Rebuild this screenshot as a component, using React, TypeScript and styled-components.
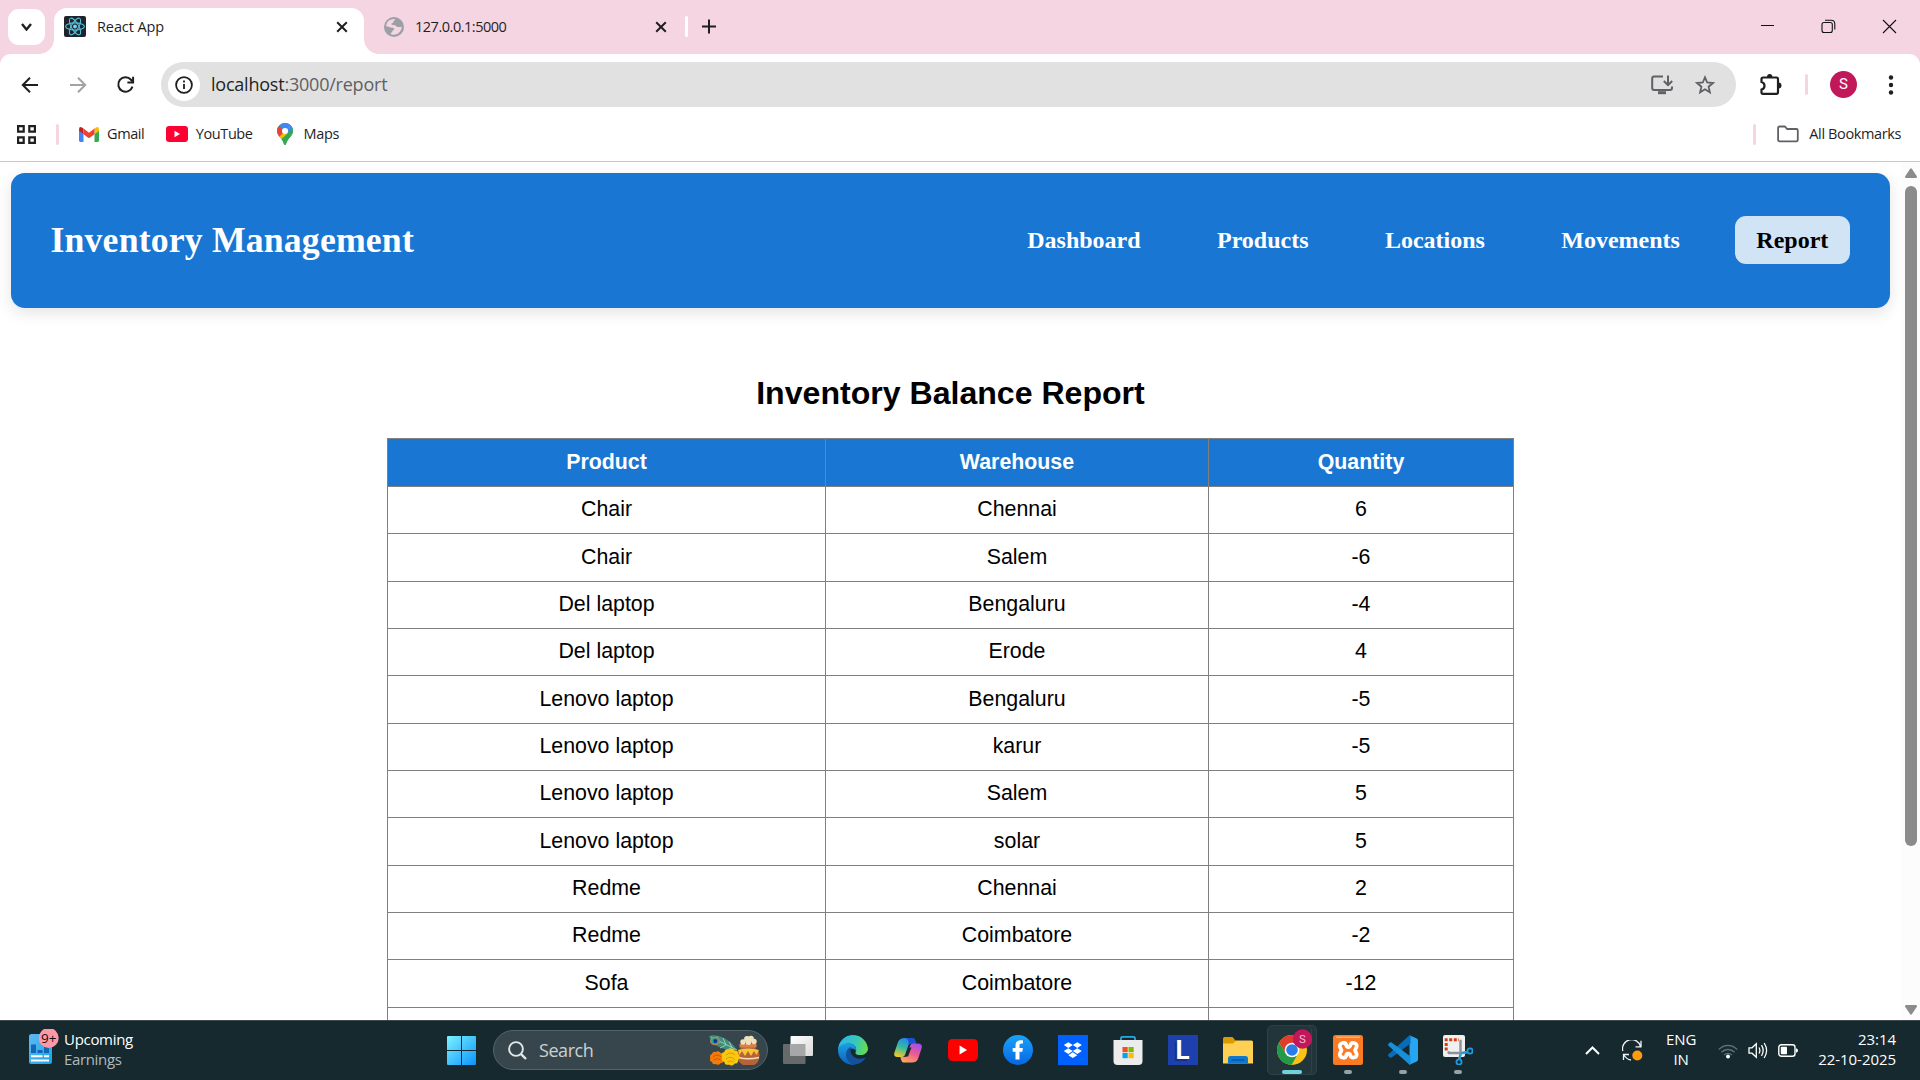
import React from "react";
import styled, { createGlobalStyle } from "styled-components";

const UI = `"Open Sans", "Noto Sans", sans-serif`;

const Global = createGlobalStyle`
  html, body { margin: 0; padding: 0; overflow: hidden; background: #fff; }
  * { box-sizing: border-box; }
  svg { display: block; flex: none; }
`;

const Screen = styled.div`
  width: 1920px;
  height: 1080px;
  display: flex;
  flex-direction: column;
  background: #fff;
  font-family: ${UI};
  color: #1f1f1f;
  overflow: hidden;
`;

/* ---------- tab strip ---------- */

const TabStrip = styled.div`
  height: 54px;
  flex: none;
  display: flex;
  background: #f6d5e3;
`;

const TabSearch = styled.div`
  width: 37px;
  height: 36px;
  margin: 9px 9px 0 8px;
  border-radius: 11px;
  background: #fff;
  display: flex;
  align-items: center;
  justify-content: center;
`;

const Flare = styled.div<{ $side: "left" | "right" }>`
  width: 15px;
  height: 15px;
  align-self: flex-end;
  margin-${(p) => p.$side}: ${(p) => (p.$side === "left" ? "-15px" : "0")};
  background: radial-gradient(
    circle at ${(p) => (p.$side === "left" ? "0 0" : "100% 0")},
    transparent 14.5px,
    #fff 15.3px
  );
`;

const ActiveTab = styled.div`
  width: 310px;
  height: 46px;
  margin-top: 8px;
  padding: 0 16px 9px 10px;
  border-radius: 13px 13px 0 0;
  background: #fff;
  display: flex;
  align-items: center;
`;

const IdleTab = styled.div`
  width: 306px;
  height: 38px;
  margin-top: 8px;
  padding: 0 18px 1px 5px;
  display: flex;
  align-items: center;
`;

const TabTitle = styled.span<{ $ls?: number }>`
  flex: 1;
  margin-left: 11px;
  font-size: 14.5px;
  line-height: 20px;
  letter-spacing: ${(p) => p.$ls ?? 0}px;
  white-space: nowrap;
`;

const Divider = styled.div<{ $color: string; $m: string }>`
  width: 3px;
  height: 21px;
  flex: none;
  margin: ${(p) => p.$m};
  border-radius: 2px;
  background: ${(p) => p.$color};
`;

const NewTab = styled.div`
  padding: 19px 0 0 14px;
`;

const WindowControls = styled.div`
  margin-left: auto;
  padding: 19px 23px 0 0;
  display: flex;
  gap: 46px;
`;

/* ---------- toolbar ---------- */

const ToolbarBack = styled.div`
  height: 61px;
  flex: none;
  background: linear-gradient(#f6d5e3 20px, #fff 20px);
`;

const Toolbar = styled.div`
  height: 61px;
  padding: 8px 0 8px 21px;
  border-radius: 11px 11px 0 0;
  background: #fff;
  display: flex;
  align-items: center;
`;

const NavButtons = styled.div`
  width: 140px;
  flex: none;
  display: flex;
  gap: 29.5px;
  align-items: center;
`;

const AddressBar = styled.div`
  width: 1575px;
  height: 45px;
  flex: none;
  padding: 0 21px 0 7px;
  border-radius: 23px;
  background: #e1e1e1;
  display: flex;
  align-items: center;
`;

const SiteInfo = styled.div`
  width: 32px;
  height: 32px;
  border-radius: 50%;
  background: #fff;
  display: flex;
  align-items: center;
  justify-content: center;
`;

const Url = styled.span`
  flex: 1;
  margin: 0 0 2px 11px;
  font-size: 18px;
  line-height: 26px;
  letter-spacing: -0.22px;
  color: #5f6063;
  b { font-weight: 400; color: #1f1f1f; }
`;

const Star = styled.div`
  margin-left: 22px;
`;

const ToolbarEnd = styled.div`
  flex: 1;
  padding: 0 0 0 24px;
  display: flex;
  align-items: center;
`;

const Avatar = styled.div`
  width: 27px;
  height: 27px;
  margin: 0 31px 0 22px;
  border-radius: 50%;
  background: #c2185b;
  color: #fff;
  font: 15px/27px Roboto, sans-serif;
  text-align: center;
`;

/* ---------- bookmarks ---------- */

const Bookmarks = styled.div`
  height: 47px;
  flex: none;
  padding: 0 19px 8px 17px;
  border-bottom: 1px solid #c9c9c9;
  display: flex;
  align-items: center;
`;

const Bookmark = styled.div<{ $gap: number; $right: number; $ls: number }>`
  display: flex;
  align-items: center;
  gap: ${(p) => p.$gap}px;
  margin-right: ${(p) => p.$right}px;
  font-size: 14.5px;
  line-height: 20px;
  letter-spacing: ${(p) => p.$ls}px;
  white-space: nowrap;
`;

const AllBookmarks = styled.div`
  margin-left: auto;
  display: flex;
  align-items: center;
`;

/* ---------- page ---------- */

const Viewport = styled.div`
  height: 858px;
  flex: none;
  display: flex;
  overflow: hidden;
`;

const Page = styled.div`
  width: 1901px;
  padding: 11px;
  color: #000;
`;

const Header = styled.header`
  height: 135px;
  padding: 0 40px;
  border-radius: 14px;
  background: #1976d2;
  box-shadow: 0 5px 16px rgba(0, 0, 0, 0.11);
  display: flex;
  align-items: center;
  justify-content: space-between;
`;

const Brand = styled.h1`
  margin: 0 0 1px -0.5px;
  font: bold 35.75px/41px "Liberation Serif", serif;
  letter-spacing: 0.15px;
  color: #fff;
`;

const Nav = styled.nav`
  display: flex;
  gap: 33px;
  margin-bottom: 2px;
`;

const NavLink = styled.a<{ $active?: boolean }>`
  padding: 11px 21.7px;
  border-radius: 11px;
  font: bold 24px/26px "Liberation Serif", serif;
  color: ${(p) => (p.$active ? "#000" : "#fff")};
  background: ${(p) => (p.$active ? "#d1e4f6" : "transparent")};
`;

const Content = styled.main`
  padding-top: 66px;
  font-family: "Liberation Sans", Arial, sans-serif;
`;

const Title = styled.h2`
  margin: 0 0 26px;
  font-size: 32.1px;
  line-height: 38px;
  text-align: center;
`;

const Table = styled.table`
  width: 1126px;
  margin: 0 auto;
  table-layout: fixed;
  border-collapse: collapse;
  font-size: 21.35px;
  line-height: 24px;
  text-align: center;
`;

const Cell = styled.td`
  height: 47.33px;
  padding: 0 0 1.5px;
  border: 1px solid #808080;
`;

const HeadCell = styled.th<{ $w: number }>`
  width: ${(p) => p.$w}px;
  height: 48px;
  padding: 0 0 2px;
  border: 1px solid #808080;
  background: #1976d2;
  color: #fff;
`;

const Scrollbar = styled.div`
  width: 19px;
  background: #fcfcfc;
  display: flex;
  flex-direction: column;
  align-items: center;
  padding: 6px 0 5px 0;
`;

const Thumb = styled.div`
  width: 12px;
  height: 660px;
  margin: 8px 0 auto;
  border-radius: 6px;
  background: #8b8b8b;
`;

/* ---------- taskbar ---------- */

const Taskbar = styled.footer`
  height: 60px;
  flex: none;
  border-top: 1px solid #3b494f;
  background: #15292f;
  display: flex;
  color: #fff;
`;

const Widgets = styled.div`
  width: 447px;
  padding: 8px 0 0 28px;
  display: flex;
  gap: 4px;
`;

const WidgetText = styled.div`
  display: flex;
  flex-direction: column;
  font-size: 15px;
  line-height: 20px;
  color: #fff;
  span:last-child { color: #b2babc; letter-spacing: -0.35px; }
  span:first-child { letter-spacing: -0.3px; }
`;

const Start = styled.div`
  width: 46px;
  padding-top: 15px;
`;

const SearchBox = styled.div`
  width: 275px;
  height: 40px;
  margin: 9px 2px 0 0;
  padding: 0 6px 0 14px;
  border: 1px solid #55636a;
  border-radius: 20px;
  background: #37464c;
  display: flex;
  align-items: center;
  font-size: 18px;
  color: #ccd1d3;
  span { flex: 1; margin-left: 12px; letter-spacing: -0.45px; }
`;

const AppButton = styled.div`
  width: 55px;
  height: 50px;
  margin-top: 4px;
  padding-top: 10px;
  display: flex;
  flex-direction: column;
  align-items: center;
  gap: 5px;
`;

const FocusPlate = styled.div`
  width: 45px;
  height: 50px;
  margin: 4px 8px 0 2px;
  padding-left: 5px;
  border: 1px solid #2f4147;
  border-radius: 5px;
  background: #22353b;
  box-shadow: 5px 0 0 -1px #22353b, 5px 0 0 0 #2f4147;
  display: flex;
  flex-direction: column;
  align-items: center;
  gap: 4px;
`;

const Indicator = styled.i<{ $on?: boolean }>`
  width: ${(p) => (p.$on ? 20 : 8)}px;
  height: 4px;
  border-radius: 2px;
  background: ${(p) => (p.$on ? "#6fd3da" : "#98a1a5")};
`;

const LetterTile = styled.div`
  width: 30px;
  height: 30px;
  background: #1e40af;
  font: bold 26px/30px Roboto, sans-serif;
  text-align: center;
  text-shadow: -2px 2px 0 #173080;
`;

const IconSlot = styled.div`
  height: 30px;
  display: flex;
  align-items: center;
`;

const Tray = styled.div`
  margin-left: auto;
  padding-right: 24px;
  display: flex;
  align-items: center;
`;

const Stack = styled.div<{ $align: string; $m: string; $ls: number }>`
  margin: ${(p) => p.$m};
  padding-bottom: 3px;
  display: flex;
  flex-direction: column;
  align-items: ${(p) => p.$align};
  font-size: 15px;
  line-height: 20px;
  letter-spacing: ${(p) => p.$ls}px;
  white-space: nowrap;
`;

const TrayIcon = styled.div<{ $m: string }>`
  margin: ${(p) => p.$m};
`;

/* ---------- icons ---------- */

const ReactLogo = () => (
  <svg width="22" height="21" viewBox="0 0 22 21">
    <rect width="22" height="21" rx="2" fill="#20232a" />
    <g fill="none" stroke="#53c1de" strokeWidth="1.1">
      <ellipse cx="11" cy="10.5" rx="9.4" ry="3.6" />
      <ellipse cx="11" cy="10.5" rx="9.4" ry="3.6" transform="rotate(60 11 10.5)" />
      <ellipse cx="11" cy="10.5" rx="9.4" ry="3.6" transform="rotate(120 11 10.5)" />
    </g>
    <circle cx="11" cy="10.5" r="1.9" fill="#61dafb" />
  </svg>
);

const CloseX = () => (
  <svg width="12" height="12" viewBox="0 0 12 12" stroke="#1f1f1f" strokeWidth="2">
    <path d="M1.2 1.2l9.6 9.6M10.8 1.2l-9.6 9.6" />
  </svg>
);

const Globe = () => (
  <svg width="20" height="20" viewBox="0 0 20 20">
    <circle cx="10" cy="10" r="10" fill="#9aa0a6" />
    <path d="M2.2 9.6C2 6.600 3.600 3.800 6.500 2.700c1.300-.5 3.200-.9 4.700-.6-.2 1.300-1.600 1.300-1.700 2.600 0 1.100-1 1.400-1.900 1.500-.4 1-.1 1.600 1 1.700 1.400.1 2.800-.1 3.500 1.200.4.900 1.200.9 2.200.9 1.200 0 2.300.1 3.500-.3-.2 3.900-3.500 7.900-7.800 8-1.500.1-2.700-.3-3.500-.9.300-1.300 1.700-1.200 1.900-2.500.3-1.500 1.700-1 1.900-2.300-.6-1.600-2-1.200-3.300-1.500-1.800-.3-3-.9-4.800-.9z" fill="#f6d5e3" />
  </svg>
);

const Chevron = ({ w, h, sw, color, up }: { w: number; h: number; sw: number; color: string; up?: boolean }) => (
  <svg width={w} height={h} viewBox={`0 0 ${w} ${h}`} fill="none" stroke={color} strokeWidth={sw}>
    <path d={up ? `M1 ${h - 1}L${w / 2} 1.500L${w - 1} ${h - 1}` : `M1 1L${w / 2} ${h - 1.5}L${w - 1} 1`} />
  </svg>
);

const Arrow = ({ color, flip }: { color: string; flip?: boolean }) => (
  <svg width="18" height="18" viewBox="0 0 18 18" fill="none" stroke={color} strokeWidth="2">
    <g transform={flip ? "matrix(-1 0 0 1 18 0)" : undefined}>
      <path d="M17 9H2.500M9 1.800L1.800 9L9 16.200" />
    </g>
  </svg>
);

const Reload = () => (
  <svg width="19" height="19" viewBox="0 0 20 20" fill="none" stroke="#1f1f1f" strokeWidth="2.1">
    <path d="M17.300 12.200A7.600 7.600 0 1 1 15.800 5L17.500 7" />
    <path d="M18 1.800V7.800H12" />
  </svg>
);

const Info = () => (
  <svg width="18" height="18" viewBox="0 0 18 18" fill="none" stroke="#1f1f1f" strokeWidth="1.800">
    <circle cx="9" cy="9" r="7.900" />
    <path d="M9 8v5M9 4.600v1.800" />
  </svg>
);

const Install = () => (
  <svg width="22" height="20" viewBox="0 0 22 20" fill="none" stroke="#606164" strokeWidth="2">
    <path d="M12 1.500H3.200Q1.200 1.500 1.200 3.500V13Q1.200 15 3.200 15H19Q21 15 21 13V11.500" />
    <path d="M17 .5V10M12.800 6L17 10.200L21.200 6" />
    <path d="M7 17.700H15" strokeWidth="3" />
  </svg>
);

const StarIcon = () => (
  <svg width="20" height="20" viewBox="0 0 20 20" fill="none" stroke="#606164" strokeWidth="1.800">
    <path d="M10 2.300L12.200 7.500L17.900 8L13.600 11.700L14.900 17.300L10 14.300L5.100 17.300L6.400 11.700L2.100 8L7.800 7.500Z" />
  </svg>
);

const Puzzle = () => (
  <svg width="22" height="22" viewBox="0 0 22 22">
    <path d="M3 3.500H16.500Q18 3.500 18 5V18Q18 19.800 16.500 19.800H3Q1.500 19.800 1.500 18.500V15.500C5.500 14.500 5.500 9 1.500 8V5Q1.500 3.500 3 3.500Z" fill="none" stroke="#1f1f1f" strokeWidth="2.200" />
    <path d="M7 3a2.700 3 0 0 1 5.400 0zM18.500 8.500a3 2.900 0 0 1 0 5.800z" fill="#1f1f1f" />
  </svg>
);

const AppsGrid = () => (
  <svg width="19" height="19" viewBox="0 0 19 19" fill="none" stroke="#1f1f1f" strokeWidth="2.200">
    <path d="M1.100 1.100h5.600v5.600H1.100zM12.300 1.100h5.600v5.600h-5.600zM1.100 12.300h5.600v5.600H1.100zM12.300 12.300h5.600v5.600h-5.600z" />
  </svg>
);

const GmailLogo = () => (
  <svg width="20" height="15" viewBox="0 0 20 15">
    <path d="M0 3.500L4.500 6.800V15H1.400Q0 15 0 13.600z" fill="#4285f4" />
    <path d="M20 3.500L15.500 6.800V15H18.600Q20 15 20 13.600z" fill="#34a853" />
    <path d="M15.500 1.500L17 .4Q20-.8 20 2.500V3.800L15.500 7.200z" fill="#fbbc04" />
    <path d="M4.500 1.500L3 .4Q0-.8 0 2.500V3.800L4.500 7.200z" fill="#c5221f" />
    <path d="M4.500 1.500L10 5.700L15.500 1.500V7.200L10 11.300L4.500 7.200z" fill="#ea4335" />
  </svg>
);

const YouTubeLogo = ({ w, h, color }: { w: number; h: number; color: string }) => (
  <svg width={w} height={h} viewBox="0 0 22 15.500" preserveAspectRatio="none">
    <rect width="22" height="15.500" rx="3.200" fill={color} />
    <path d="M8.500 4.600V10.900L14 7.750z" fill="#fff" />
  </svg>
);

const MapsLogo = () => (
  <svg width="16" height="22" viewBox="0 0 16 22">
    <clipPath id="pin">
      <path d="M8 0a8 8 0 0 1 8 8c0 5-5.500 7-7 13.200q-.2.800-1 .8t-1-.8C5.500 15 0 13 0 8a8 8 0 0 1 8-8z" />
    </clipPath>
    <g clipPath="url(#pin)">
      <rect width="16" height="22" fill="#34a853" />
      <path d="M0 2L8 8L2.500 14L-1 12z" fill="#ea4335" />
      <path d="M8 8L1.500 14.500L5 18L15 4L12 3z" fill="#fbbc04" />
      <path d="M10 11L16 4V14L8 22H4L3 17.500z" fill="#34a853" />
      <path d="M2 2.500L8 8L15 1L8-2z" fill="#4285f4" />
      <path d="M10 6L14.500 1.500L16 5L11.500 9.500z" fill="#4285f4" />
    </g>
    <circle cx="8" cy="8" r="3" fill="#fff" />
  </svg>
);

const FolderOutline = () => (
  <svg width="22" height="18" viewBox="0 0 22 18" fill="none" stroke="#606164" strokeWidth="1.800">
    <path d="M1.100 14.800V3Q1.100 1.500 2.600 1.500H7.800L10.200 4H19.300Q20.800 4 20.800 5.500V14.800Q20.800 16.400 19.300 16.400H2.600Q1.100 16.400 1.100 14.800z" />
  </svg>
);

const WidgetIcon = () => (
  <svg width="32" height="36" viewBox="0 0 32 36">
    <defs>
      <linearGradient id="wg" x1="0" y1="0" x2="1" y2="1">
        <stop offset="0" stopColor="#62b8f2" />
        <stop offset="1" stopColor="#19a5ea" />
      </linearGradient>
    </defs>
    <rect x="1" y="5" width="23" height="30" rx="2.500" fill="url(#wg)" />
    <path d="M3 15.500h5v8.500H3zM9.500 21h5v3h-5zM16 18h5v6h-5z" fill="#1267b4" />
    <path d="M3 27.300h11.500M16 27.300h5M3 31.500h18" stroke="#fff" strokeWidth="2" />
    <circle cx="20.700" cy="9" r="10" fill="#ff98a5" />
    <text x="20.700" y="13.800" fontSize="13.500" textAnchor="middle" fill="#111" fontFamily="Open Sans, sans-serif">9+</text>
  </svg>
);

const WindowsLogo = () => (
  <svg width="29" height="29" viewBox="0 0 29 29">
    <defs>
      <linearGradient id="win" x1="0" y1="0" x2="1" y2="1">
        <stop offset="0" stopColor="#7df2ff" />
        <stop offset="1" stopColor="#0a93fb" />
      </linearGradient>
    </defs>
    <path d="M1 0H14V14H0V1Q0 0 1 0zM15 0H28Q29 0 29 1V14H15zM0 15H14V29H1Q0 29 0 28zM15 15H29V28Q29 29 28 29H15z" fill="url(#win)" />
  </svg>
);

const Magnifier = () => (
  <svg width="19" height="19" viewBox="0 0 19 19" fill="none" stroke="#e3e6e7" strokeWidth="1.900">
    <circle cx="8" cy="8" r="6.900" />
    <path d="M12.800 12.800L18 18" strokeWidth="2.400" />
  </svg>
);

const marigold = (cx: number, cy: number, r: number) =>
  Array.from({ length: 9 }, (_, i) => {
    const a = (i * Math.PI * 2) / 9;
    return <circle key={i} cx={cx + Math.cos(a) * r * 0.68} cy={cy + Math.sin(a) * r * 0.62} r={r * 0.36} />;
  });

const FestivalArt = () => (
  <svg width="53" height="31" viewBox="0 0 53 31">
    <path d="M1 1Q8-1 16 3Q24 7 29 15Q20 16 12 12.500Q3 9 1 1z" fill="#3f8c7c" />
    <path d="M3 2L29 15M9 1.500l3 6-7 1M15 3l3 7-6 3M21 6.500l3 6-5 2.500" stroke="#9cc9ad" strokeWidth="1" fill="none" />
    <ellipse cx="7" cy="6" rx="5" ry="4.300" fill="#a18a4e" />
    <ellipse cx="7" cy="6" rx="3.500" ry="3.100" fill="#2aa3a5" />
    <circle cx="7.300" cy="6" r="2" fill="#142f96" />
    <g fill="#f47b0a">{marigold(9, 23, 7)}<circle cx="9" cy="23" r="4.500" /></g>
    <path d="M5 22q4-4 8 0M5.500 25q4-3 7 0" stroke="#cf5600" fill="none" />
    <path d="M31.500 10H48.500L47 13Q52 16 51.500 21Q51 28 46 30H35Q29.500 27 29.500 21Q29.500 16 33 13z" fill="#b8623a" />
    <path d="M31.500 9H48.500V12.500H31.500z" fill="#d9814c" />
    <path d="M30 15Q40 12 51 15L48.500 20L46 16L43 21L40 16L37 21L34 16L31.500 20z" fill="#f7c733" />
    <path d="M30.500 22.500Q40 25 51 22.500" stroke="#f6dfb7" strokeWidth="1.400" fill="none" />
    <g fill="#f0e1bd">
      <circle cx="35" cy="7" r="2.700" /><circle cx="39" cy="4" r="2.900" /><circle cx="43" cy="3.500" r="2.800" />
      <circle cx="46" cy="6.500" r="2.700" /><circle cx="40.500" cy="7" r="3" />
    </g>
    <g fill="#fbc70f">{marigold(22.5, 22, 8.7)}<circle cx="22.500" cy="22" r="6" /></g>
    <path d="M18 20q5-4 9 0M18 24q5-4 9 1M19.500 27q3-2 6 0" stroke="#dd9a00" fill="none" />
  </svg>
);

const TaskView = () => (
  <svg width="30" height="30" viewBox="0 0 30 30">
    <defs>
      <linearGradient id="tv" x1="0" y1="0" x2="1" y2="1">
        <stop offset="0" stopColor="#fff" />
        <stop offset="1" stopColor="#d9d9d9" />
      </linearGradient>
    </defs>
    <rect x="0" y="9" width="22.500" height="20" rx="1" fill="#666a6b" />
    <rect x="7.500" y="1" width="22.500" height="20" rx="1" fill="url(#tv)" />
    <rect x="7.500" y="9" width="15" height="12" fill="#a6a7a8" />
  </svg>
);

const EdgeLogo = () => (
  <svg width="30" height="30" viewBox="0 0 30 30">
    <defs>
      <linearGradient id="eg1" x1="0" y1=".3" x2="1" y2=".5">
        <stop offset="0" stopColor="#2fb4ea" />
        <stop offset=".55" stopColor="#35c6c0" />
        <stop offset="1" stopColor="#66dd4e" />
      </linearGradient>
      <linearGradient id="eg2" x1="0" y1="0" x2="0" y2="1">
        <stop offset="0" stopColor="#1ba0e3" />
        <stop offset="1" stopColor="#0c5fbd" />
      </linearGradient>
      <clipPath id="edgeClip"><circle cx="15" cy="15" r="15" /></clipPath>
    </defs>
    <g clipPath="url(#edgeClip)">
      <path d="M0 14C0 5 7-.2 15-.2C24-.2 30.200 6 30.200 12.500C30.200 17 27 20 22.500 20C18.500 20 17 18.500 17.600 17C19 14.500 18 9.500 12 8.500C6 8 1 11 0 16z" fill="url(#eg1)" />
      <path d="M0 14.500C2 9.500 7 8 11 8.300C16 8.800 19 12.500 17.600 16C16.500 12.500 11 12.500 9 17C7 23 12 29 18 30H10L0 25z" fill="url(#eg2)" />
      <path d="M13 11.500C9 13.500 7 18 8.500 22.500C10 27 14 30.500 19 29.500C23 28.500 26.500 25.500 28 23C27.500 22 25 24 21.500 23.700C15 23.500 11 18 13 11.500z" fill="#13529b" />
    </g>
  </svg>
);

const CopilotLogo = () => (
  <svg width="30" height="30" viewBox="0 0 30 30">
    <defs>
      <linearGradient id="cp1" x1=".6" y1="0" x2=".2" y2="1">
        <stop offset="0" stopColor="#2086f0" />
        <stop offset=".5" stopColor="#35b9a5" />
        <stop offset="1" stopColor="#f6cc22" />
      </linearGradient>
      <linearGradient id="cp2" x1=".8" y1="0" x2=".3" y2="1">
        <stop offset="0" stopColor="#a04df0" />
        <stop offset=".5" stopColor="#ee5a90" />
        <stop offset="1" stopColor="#ffa45c" />
      </linearGradient>
    </defs>
    <path d="M12 3H19.500Q21.500 3 22.200 5.500L23 8.500H18Q16 8.500 15.300 10.500L12 20Q11 22 9 22H4.500Q.5 22 1.300 18L5 7Q6.500 3 12 3z" fill="url(#cp1)" />
    <path d="M12 3H19.500Q21.500 3 22.200 5.500L23 8.500H18L15.500 10Q16.500 4 12 3z" fill="#1a52d3" />
    <path d="M19.500 8.500H25.500Q29.800 9 28.700 13L25 24Q23.500 27.500 19 27.500H10.500Q8.500 27 8 24.500L7.300 22H11Q13.500 22 14.300 19.500L17 11Q17.800 8.500 19.500 8.500z" fill="url(#cp2)" />
    <path d="M16.500 12.500H18.500L15 21.500H12z" fill="#15292f" />
  </svg>
);

const FacebookLogo = () => (
  <svg width="30" height="30" viewBox="0 0 30 30">
    <defs>
      <linearGradient id="fb" x1="0" y1="0" x2="0" y2="1">
        <stop offset="0" stopColor="#19a3fa" />
        <stop offset="1" stopColor="#0866e4" />
      </linearGradient>
    </defs>
    <circle cx="15" cy="15" r="15" fill="url(#fb)" />
    <path d="M12.500 24.500V16.700H9.700V12.900H12.500V10.500C12.500 7 14.500 5.200 17.500 5.200C18.800 5.200 20 5.400 20 5.400V8.600H18.500C17 8.600 16.500 9.500 16.500 10.500V12.900H19.900L19.300 16.700H16.500V24.500z" fill="#fff" />
  </svg>
);

const DropboxLogo = () => (
  <svg width="30" height="30" viewBox="0 0 30 30">
    <rect width="30" height="30" fill="#0061fe" />
    <path d="M10.300 7.200l4.500 2.900-4.500 2.900-4.500-2.900zM19.300 7.200l4.500 2.900-4.500 2.900-4.500-2.900zM10.300 13.200l4.500 2.900-4.500 2.900-4.500-2.900zM19.300 13.200l4.500 2.900-4.500 2.900-4.500-2.900zM14.800 17.300l4.500 2.900-4.500 2.900-4.500-2.900z" fill="#fff" />
  </svg>
);

const StoreLogo = () => (
  <svg width="30" height="30" viewBox="0 0 30 30">
    <path d="M8 6V3.300Q8 1.800 9.500 1.800H20.500Q22 1.800 22 3.300V6" fill="none" stroke="#2ba8dc" strokeWidth="1.800" />
    <path d="M.5 5H29.500V26Q29.500 30 25.500 30H4.500Q.5 30 .5 26z" fill="#ececec" />
    <path d="M9.500 12h5.200v5.200H9.500z" fill="#f25022" />
    <path d="M15.500 12h5.200v5.200h-5.200z" fill="#7fba00" />
    <path d="M9.500 18h5.200v5.200H9.500z" fill="#00a4ef" />
    <path d="M15.500 18h5.200v5.200h-5.200z" fill="#ffb900" />
  </svg>
);

const ExplorerLogo = () => (
  <svg width="30" height="30" viewBox="0 0 30 30">
    <path d="M0 3.500Q0 2 1.500 2H9.500L12.500 5.500V9H0z" fill="#dd9a00" />
    <path d="M0 8.500H10L13 5.500H28.500Q30 5.500 30 7V28.500H0z" fill="#ffd053" />
    <path d="M5 28.500V23.500Q5 21 7.500 21H22.500Q25 21 25 23.500V28.500z" fill="#0f78cf" />
    <path d="M8.500 25H21.500" stroke="#0a4f91" strokeWidth="1.200" />
  </svg>
);

const ChromeLogo = () => (
  <svg width="44" height="40" viewBox="0 0 44 40">
    <clipPath id="chromeClip"><circle cx="22" cy="24" r="15" /></clipPath>
    <g clipPath="url(#chromeClip)">
      <rect x="7" y="9" width="30" height="30" fill="#fbc116" />
      <path d="M22 17H40V5H5L9 16.500L15.900 27.500L22 24z" fill="#e33b2e" />
      <path d="M9 16.500L15.900 27.500L22 31L28.100 27.500L21.300 39.500H5V16z" fill="#229a48" />
    </g>
    <circle cx="22" cy="24" r="7.300" fill="#fff" />
    <circle cx="22" cy="24" r="5.800" fill="#2a7de9" />
    <circle cx="32.500" cy="13" r="9.700" fill="#c2185b" />
    <text x="32.500" y="17" fontSize="11.500" textAnchor="middle" fill="#f0bfd3" fontFamily="Roboto, sans-serif">S</text>
  </svg>
);

const XamppLogo = () => (
  <svg width="30" height="30" viewBox="0 0 30 30">
    <rect width="30" height="30" rx="2.500" fill="#fb7a24" />
    <rect x="3" y="1.500" width="24" height="1.500" rx=".7" fill="#ffb27a" />
    <path d="M9.500 8Q12.500 7 13.200 10Q13.700 12 15.300 12Q16.900 12 17.400 10Q18.200 7.500 21 8Q24.500 9 23.500 12Q22.500 14 22 15.300Q22.500 16.500 23.500 18.500Q24.500 21.500 21 22.500Q18.200 23 17.400 20.500Q16.900 18.600 15.300 18.600Q13.700 18.600 13.200 20.500Q12.500 23.500 9.500 22.500Q6 21.500 7 18.500Q8 16.500 8.500 15.300Q8 14 7 12Q6 9 9.500 8z" fill="none" stroke="#fff" strokeWidth="3.800" strokeLinejoin="round" />
  </svg>
);

const VSCodeLogo = () => (
  <svg width="30" height="30" viewBox="0 0 30 30">
    <path d="M21.500.3L28.800 3.500Q30 4.200 30 5.500V24.500Q30 25.800 28.800 26.500L21.500 29.700z" fill="#25a5f2" />
    <path d="M21.500.3Q22.300 0 22.500 1V8.500L3.700 22.600Q2.800 23 2 22.500L.5 21.200Q-.4 20.200.5 19.200z" fill="#0a6bb8" />
    <path d="M21.500 29.700Q22.300 30 22.500 29V21.500L3.700 7.400Q2.800 7 2 7.500L.5 8.800Q-.4 9.800.5 10.800z" fill="#178fd9" />
  </svg>
);

const SnipLogo = () => (
  <svg width="30" height="30" viewBox="0 0 30 30">
    <rect width="22" height="22" rx="2" fill="#f0f0f0" />
    <path d="M3.200 15.500V4.700H16" fill="none" stroke="#d63b0c" strokeWidth="3" strokeDasharray="3 1.600" />
    <path d="M16.500 6L17.500 6V20L16 24M5 16.500L6 18H20L24 17" stroke="#8d9296" strokeWidth="2.400" fill="none" />
    <circle cx="27" cy="16" r="2.600" fill="none" stroke="#1d9be0" strokeWidth="1.800" />
    <circle cx="16" cy="27" r="2.600" fill="none" stroke="#1d9be0" strokeWidth="1.800" />
    <path d="M18 18L24.500 17M17.500 19L16.500 24.500" stroke="#1d9be0" strokeWidth="1.800" />
  </svg>
);

const Sync = () => (
  <svg width="21" height="21" viewBox="0 0 21 21" fill="none" stroke="#f2f4f4" strokeWidth="1.300">
    <path d="M.8 11A9 9 0 0 1 18.500 6.500M19 .8V6.800H13.500" />
    <path d="M1.500 20V14.500H7M1.800 15Q4.500 19.300 9 20" />
    <circle cx="15.300" cy="15.500" r="5" fill="#ff9c0d" stroke="none" />
  </svg>
);

const Wifi = () => (
  <svg width="20" height="16" viewBox="0 0 20 16" fill="none" stroke="#5e6c71" strokeWidth="1.400">
    <path d="M.8 6.500A12.500 12.500 0 0 1 19.200 6.500M3.500 9.300A8.800 8.800 0 0 1 16.500 9.300M6.200 12A5.200 5.200 0 0 1 13.800 12" />
    <circle cx="10" cy="13.500" r="2" fill="#fff" stroke="none" />
  </svg>
);

const Volume = () => (
  <svg width="20" height="17" viewBox="0 0 20 17" fill="none" stroke="#fff" strokeWidth="1.300">
    <path d="M1 5.800H4L8.300 1.800V15.200L4 11.200H1z" />
    <path d="M11 5.500Q12.800 8.500 11 11.500M13.500 3.200Q16.800 8.500 13.500 13.800M16.200 1Q21 8.500 16.200 16" />
  </svg>
);

const Battery = () => (
  <svg width="20" height="13" viewBox="0 0 20 13">
    <rect x=".8" y=".8" width="16.200" height="11.400" rx="2.500" fill="none" stroke="#fff" strokeWidth="1.400" />
    <rect x="2.800" y="2.800" width="6.200" height="7.400" rx=".8" fill="#fff" />
    <path d="M18 4.200Q20 4.500 20 6.500T18 8.800z" fill="#fff" />
  </svg>
);

/* ---------- data ---------- */

const links = ["Dashboard", "Products", "Locations", "Movements", "Report"];

const rows = [
  ["Chair", "Chennai", "6"],
  ["Chair", "Salem", "-6"],
  ["Del laptop", "Bengaluru", "-4"],
  ["Del laptop", "Erode", "4"],
  ["Lenovo laptop", "Bengaluru", "-5"],
  ["Lenovo laptop", "karur", "-5"],
  ["Lenovo laptop", "Salem", "5"],
  ["Lenovo laptop", "solar", "5"],
  ["Redme", "Chennai", "2"],
  ["Redme", "Coimbatore", "-2"],
  ["Sofa", "Coimbatore", "-12"],
  ["", "", ""],
];

export default function App() {
  return (
    <Screen>
      <Global />
      <TabStrip>
        <TabSearch>
          <Chevron w={11} h={8} sw={2.4} color="#1f1f1f" />
        </TabSearch>
        <Flare $side="left" />
        <ActiveTab>
          <ReactLogo />
          <TabTitle $ls={-0.1}>React App</TabTitle>
          <CloseX />
        </ActiveTab>
        <Flare $side="right" />
        <IdleTab>
          <Globe />
          <TabTitle $ls={-0.48}>127.0.0.1:5000</TabTitle>
          <CloseX />
        </IdleTab>
        <Divider $color="#fff" $m="16px 0 0" />
        <NewTab>
          <svg width="14" height="15" viewBox="0 0 14 15" stroke="#1f1f1f" strokeWidth="2">
            <path d="M7 .5v14M0 7.500h14" />
          </svg>
        </NewTab>
        <WindowControls>
          <svg width="14" height="14" viewBox="0 0 14 14" stroke="#111" strokeWidth="1">
            <path d="M0 6.500h13" />
          </svg>
          <svg width="15" height="15" viewBox="0 0 15 15" fill="none" stroke="#111" strokeWidth="1.100">
            <rect x="1" y="3.500" width="10.300" height="10" rx="2" />
            <path d="M4 1.200H10Q13.800 1.200 13.800 5V10.500" />
          </svg>
          <svg width="15" height="15" viewBox="0 0 15 15" stroke="#111" strokeWidth="1.100">
            <path d="M1 1l13 13M14 1L1 14" />
          </svg>
        </WindowControls>
      </TabStrip>

      <ToolbarBack>
        <Toolbar>
          <NavButtons>
            <Arrow color="#1f1f1f" />
            <Arrow color="#a2a2a2" flip />
            <Reload />
          </NavButtons>
          <AddressBar>
            <SiteInfo><Info /></SiteInfo>
            <Url><b>localhost</b>:3000/report</Url>
            <Install />
            <Star><StarIcon /></Star>
          </AddressBar>
          <ToolbarEnd>
            <Puzzle />
            <Divider $color="#f6d5e3" $m="0 0 0 23px" />
            <Avatar>S</Avatar>
            <svg width="6" height="20" viewBox="0 0 6 20" fill="#1f1f1f">
              <circle cx="3" cy="2.500" r="2.200" />
              <circle cx="3" cy="10" r="2.200" />
              <circle cx="3" cy="17.500" r="2.200" />
            </svg>
          </ToolbarEnd>
        </Toolbar>
      </ToolbarBack>

      <Bookmarks>
        <AppsGrid />
        <Divider $color="#f6d5e3" $m="0 20px" />
        <Bookmark $gap={8} $right={21.5} $ls={-0.4}><GmailLogo />Gmail</Bookmark>
        <Bookmark $gap={8} $right={24.5} $ls={-0.42}><YouTubeLogo w={22} h={16} color="#ff0033" />YouTube</Bookmark>
        <Bookmark $gap={10.5} $right={0} $ls={-0.35}><MapsLogo />Maps</Bookmark>
        <AllBookmarks>
          <Divider $color="#f6d5e3" $m="0 21px 0 0" />
          <Bookmark $gap={10} $right={0} $ls={-0.38}><FolderOutline />All Bookmarks</Bookmark>
        </AllBookmarks>
      </Bookmarks>

      <Viewport>
        <Page>
          <Header>
            <Brand>Inventory Management</Brand>
            <Nav>
              {links.map((l) => (
                <NavLink key={l} $active={l === "Report"}>{l}</NavLink>
              ))}
            </Nav>
          </Header>
          <Content>
            <Title>Inventory Balance Report</Title>
            <Table>
              <thead>
                <tr>
                  <HeadCell $w={438}>Product</HeadCell>
                  <HeadCell $w={383}>Warehouse</HeadCell>
                  <HeadCell $w={305}>Quantity</HeadCell>
                </tr>
              </thead>
              <tbody>
                {rows.map((r, i) => (
                  <tr key={i}>
                    {r.map((c, j) => <Cell key={j}>{c}</Cell>)}
                  </tr>
                ))}
              </tbody>
            </Table>
          </Content>
        </Page>
        <Scrollbar>
          <svg width="12" height="10" viewBox="0 0 12 10"><path d="M5 1Q6-.5 7 1L12 8.500Q12 10 11 10H1Q0 10 0 8.500z" fill="#8b8b8b" /></svg>
          <Thumb />
          <svg width="12" height="10" viewBox="0 0 12 10"><path d="M5 9Q6 10.500 7 9L12 1.500Q12 0 11 0H1Q0 0 0 1.500z" fill="#8b8b8b" /></svg>
        </Scrollbar>
      </Viewport>

      <Taskbar>
        <Widgets>
          <WidgetIcon />
          <WidgetText><span>Upcoming</span><span>Earnings</span></WidgetText>
        </Widgets>
        <Start><WindowsLogo /></Start>
        <SearchBox>
          <Magnifier />
          <span>Search</span>
          <FestivalArt />
        </SearchBox>
        <AppButton><TaskView /></AppButton>
        <AppButton><EdgeLogo /></AppButton>
        <AppButton><CopilotLogo /></AppButton>
        <AppButton><IconSlot><YouTubeLogo w={30} h={22} color="#ff0000" /></IconSlot></AppButton>
        <AppButton><FacebookLogo /></AppButton>
        <AppButton><DropboxLogo /></AppButton>
        <AppButton><StoreLogo /></AppButton>
        <AppButton><LetterTile>L</LetterTile></AppButton>
        <AppButton><ExplorerLogo /></AppButton>
        <FocusPlate><ChromeLogo /><Indicator $on /></FocusPlate>
        <AppButton><XamppLogo /><Indicator /></AppButton>
        <AppButton><VSCodeLogo /><Indicator /></AppButton>
        <AppButton><SnipLogo /><Indicator /></AppButton>
        <Tray>
          <Chevron w={15} h={9} sw={2} color="#fff" up />
          <TrayIcon $m="0 0 0 22px"><Sync /></TrayIcon>
          <Stack $align="center" $m="0 22px 0 23px" $ls={-0.1}><span>ENG</span><span>IN</span></Stack>
          <Wifi />
          <TrayIcon $m="0 10px"><Volume /></TrayIcon>
          <Battery />
          <Stack $align="flex-end" $m="0 0 0 20px" $ls={-0.05}><span>23:14</span><span>22-10-2025</span></Stack>
        </Tray>
      </Taskbar>
    </Screen>
  );
}
